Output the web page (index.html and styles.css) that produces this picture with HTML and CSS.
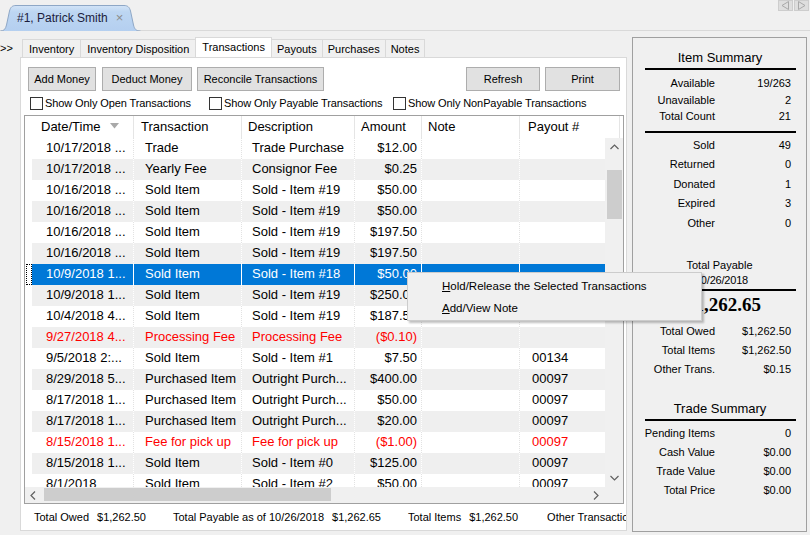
FILE: index.html
```html
<!DOCTYPE html>
<html>
<head>
<meta charset="utf-8">
<title>Patrick Smith - Transactions</title>
<link rel="stylesheet" href="styles.css">
</head>
<body>
<div class="topbar">
  <div class="doc-tab">
    <svg class="tab-shape" width="141" height="26" viewBox="0 0 141 26">
      <defs>
        <linearGradient id="tabg" x1="0" y1="0" x2="0" y2="1">
          <stop offset="0" stop-color="#d3e4f7"/>
          <stop offset="0.25" stop-color="#bdd6f2"/>
          <stop offset="1" stop-color="#b4cff0"/>
        </linearGradient>
      </defs>
      <path d="M0.5,26 C4,26 5.5,24 6.5,20 L9.5,6 C10.5,2 12.5,0.5 16,0.5 L124,0.5 C127.5,0.5 129.5,2 130.5,6 L133.5,20 C134.5,24 136,26 140.5,26" fill="url(#tabg)" stroke="#8ea7c6" stroke-width="1"/>
    </svg>
    <span class="doc-title">#1, Patrick Smith</span>
    <span class="doc-close">×</span>
  </div>
  <div class="nav-arrows">
    <span class="nav-btn"><svg width="9" height="9" viewBox="0 0 9 9"><path d="M7.5,0.5 L1,4.5 L7.5,8.5 Z" fill="none" stroke="#a8a8a8"/></svg></span>
    <span class="nav-btn"><svg width="9" height="9" viewBox="0 0 9 9"><path d="M1.5,0.5 L8,4.5 L1.5,8.5 Z" fill="none" stroke="#a8a8a8"/></svg></span>
  </div>
</div>

<div class="main">
  <div class="left">
    <div class="subtabs">
      <span class="more">&gt;&gt;</span>
      <span class="stab wide">Inventory</span>
      <span class="stab wide">Inventory Disposition</span>
      <span class="stab active">Transactions</span>
      <span class="stab">Payouts</span>
      <span class="stab">Purchases</span>
      <span class="stab">Notes</span>
    </div>
    <div class="panel">
      <div class="toolbar">
        <button class="btn w-add">Add Money</button>
        <button class="btn w-deduct">Deduct Money</button>
        <button class="btn w-rec">Reconcile Transactions</button>
        <span class="spacer"></span>
        <button class="btn w-ref">Refresh</button>
        <button class="btn w-print">Print</button>
      </div>
      <div class="filters">
        <label class="chk f1"><span class="box"></span>Show Only Open Transactions</label>
        <label class="chk f2"><span class="box"></span>Show Only Payable Transactions</label>
        <label class="chk f3"><span class="box"></span>Show Only NonPayable Transactions</label>
      </div>

      <div class="grid">
        <div class="ghead">
          <div class="h rh"></div>
          <div class="h date">Date/Time <svg class="sort" width="9" height="6" viewBox="0 0 9 6"><path d="M0,0 L9,0 L4.5,5.5 Z" fill="#a9a9a9"/></svg></div>
          <div class="h trans">Transaction</div>
          <div class="h desc">Description</div>
          <div class="h amt">Amount</div>
          <div class="h note">Note</div>
          <div class="h pay">Payout #</div>
        </div>
        <div class="gbody">
          <div class="rows">
            <div class="row"><div class="c rh"></div><div class="c date">10/17/2018 ...</div><div class="c trans">Trade</div><div class="c desc">Trade Purchase</div><div class="c amt">$12.00</div><div class="c note"></div><div class="c pay"></div></div>
            <div class="row alt"><div class="c rh"></div><div class="c date">10/17/2018 ...</div><div class="c trans">Yearly Fee</div><div class="c desc">Consignor Fee</div><div class="c amt">$0.25</div><div class="c note"></div><div class="c pay"></div></div>
            <div class="row"><div class="c rh"></div><div class="c date">10/16/2018 ...</div><div class="c trans">Sold Item</div><div class="c desc">Sold - Item #19</div><div class="c amt">$50.00</div><div class="c note"></div><div class="c pay"></div></div>
            <div class="row alt"><div class="c rh"></div><div class="c date">10/16/2018 ...</div><div class="c trans">Sold Item</div><div class="c desc">Sold - Item #19</div><div class="c amt">$50.00</div><div class="c note"></div><div class="c pay"></div></div>
            <div class="row"><div class="c rh"></div><div class="c date">10/16/2018 ...</div><div class="c trans">Sold Item</div><div class="c desc">Sold - Item #19</div><div class="c amt">$197.50</div><div class="c note"></div><div class="c pay"></div></div>
            <div class="row alt"><div class="c rh"></div><div class="c date">10/16/2018 ...</div><div class="c trans">Sold Item</div><div class="c desc">Sold - Item #19</div><div class="c amt">$197.50</div><div class="c note"></div><div class="c pay"></div></div>
            <div class="row sel"><div class="c rh"><span class="focus"></span></div><div class="c date">10/9/2018 1...</div><div class="c trans">Sold Item</div><div class="c desc">Sold - Item #18</div><div class="c amt">$50.00</div><div class="c note"></div><div class="c pay"></div></div>
            <div class="row alt"><div class="c rh"></div><div class="c date">10/9/2018 1...</div><div class="c trans">Sold Item</div><div class="c desc">Sold - Item #19</div><div class="c amt">$250.00</div><div class="c note"></div><div class="c pay"></div></div>
            <div class="row"><div class="c rh"></div><div class="c date">10/4/2018 4...</div><div class="c trans">Sold Item</div><div class="c desc">Sold - Item #19</div><div class="c amt">$187.50</div><div class="c note"></div><div class="c pay"></div></div>
            <div class="row alt red"><div class="c rh"></div><div class="c date">9/27/2018 4...</div><div class="c trans">Processing Fee</div><div class="c desc">Processing Fee</div><div class="c amt">($0.10)</div><div class="c note"></div><div class="c pay"></div></div>
            <div class="row"><div class="c rh"></div><div class="c date">9/5/2018 2:...</div><div class="c trans">Sold Item</div><div class="c desc">Sold - Item #1</div><div class="c amt">$7.50</div><div class="c note"></div><div class="c pay">00134</div></div>
            <div class="row alt"><div class="c rh"></div><div class="c date">8/29/2018 5...</div><div class="c trans">Purchased Item</div><div class="c desc">Outright Purch...</div><div class="c amt">$400.00</div><div class="c note"></div><div class="c pay">00097</div></div>
            <div class="row"><div class="c rh"></div><div class="c date">8/17/2018 1...</div><div class="c trans">Purchased Item</div><div class="c desc">Outright Purch...</div><div class="c amt">$50.00</div><div class="c note"></div><div class="c pay">00097</div></div>
            <div class="row alt"><div class="c rh"></div><div class="c date">8/17/2018 1...</div><div class="c trans">Purchased Item</div><div class="c desc">Outright Purch...</div><div class="c amt">$20.00</div><div class="c note"></div><div class="c pay">00097</div></div>
            <div class="row red"><div class="c rh"></div><div class="c date">8/15/2018 1...</div><div class="c trans">Fee for pick up</div><div class="c desc">Fee for pick up</div><div class="c amt">($1.00)</div><div class="c note"></div><div class="c pay">00097</div></div>
            <div class="row alt"><div class="c rh"></div><div class="c date">8/15/2018 1...</div><div class="c trans">Sold Item</div><div class="c desc">Sold - Item #0</div><div class="c amt">$125.00</div><div class="c note"></div><div class="c pay">00097</div></div>
            <div class="row"><div class="c rh"></div><div class="c date">8/1/2018</div><div class="c trans">Sold Item</div><div class="c desc">Sold - Item #2</div><div class="c amt">$50.00</div><div class="c note"></div><div class="c pay">00097</div></div>
          </div>
          <div class="vscroll">
            <svg class="chev" width="9" height="6" viewBox="0 0 9 6"><path d="M0.5,5 L4.5,1 L8.5,5" fill="none" stroke="#606060" stroke-width="1.2"/></svg>
            <div class="vtrack"><div class="vthumb"></div></div>
            <svg class="chev" width="9" height="6" viewBox="0 0 9 6"><path d="M0.5,1 L4.5,5 L8.5,1" fill="none" stroke="#606060" stroke-width="1.2"/></svg>
          </div>
        </div>
        <div class="hrow">
          <div class="hscroll">
            <svg class="chev-h" width="6" height="9" viewBox="0 0 6 9"><path d="M5,0.5 L1,4.5 L5,8.5" fill="none" stroke="#606060" stroke-width="1.2"/></svg>
            <div class="htrack"><div class="hthumb"></div></div>
            <svg class="chev-h" width="6" height="9" viewBox="0 0 6 9"><path d="M1,0.5 L5,4.5 L1,8.5" fill="none" stroke="#606060" stroke-width="1.2"/></svg>
          </div>
          <div class="corner"></div>
        </div>
      </div>

      <div class="totals">
        <span class="tg"><span>Total Owed</span><span>$1,262.50</span></span>
        <span class="tg"><span>Total Payable as of 10/26/2018</span><span>$1,262.65</span></span>
        <span class="tg g3"><span>Total Items</span><span>$1,262.50</span></span>
        <span class="tg"><span>Other Transactions</span><span>$0.15</span></span>
      </div>
    </div>
  </div>

  <div class="summary">
    <div class="s-head first">Item Summary</div>
    <div class="rule"></div>
    <div class="kv tight">
      <span>Available</span><span>19/263</span>
      <span>Unavailable</span><span>2</span>
      <span>Total Count</span><span>21</span>
    </div>
    <div class="rule r2"></div>
    <div class="kv wide">
      <span>Sold</span><span>49</span>
      <span>Returned</span><span>0</span>
      <span>Donated</span><span>1</span>
      <span>Expired</span><span>3</span>
      <span>Other</span><span>0</span>
    </div>
    <div class="payable">
      <div>Total Payable</div>
      <div class="asof">as of 10/26/2018</div>
    </div>
    <div class="rule r3"></div>
    <div class="big">$1,262.65</div>
    <div class="kv mid k3">
      <span>Total Owed</span><span>$1,262.50</span>
      <span>Total Items</span><span>$1,262.50</span>
      <span>Other Trans.</span><span>$0.15</span>
    </div>
    <div class="s-head trade">Trade Summary</div>
    <div class="rule r4"></div>
    <div class="kv mid k4">
      <span>Pending Items</span><span>0</span>
      <span>Cash Value</span><span>$0.00</span>
      <span>Trade Value</span><span>$0.00</span>
      <span>Total Price</span><span>$0.00</span>
    </div>
  </div>
</div>

<div class="ctx-menu">
  <div class="mi"><u>H</u>old/Release the Selected Transactions</div>
  <div class="mi"><u>A</u>dd/View Note</div>
</div>
</body>
</html>
```

FILE: styles.css
```css
* { box-sizing: border-box; }

body {
  margin: 0;
  width: 810px;
  height: 535px;
  overflow: hidden;
  position: relative;
  background: #f0f0f0;
  font-family: "Liberation Sans", Arial, sans-serif;
  font-size: 11px;
  color: #000;
}

/* ---------- document tab strip ---------- */
.topbar {
  height: 31px;
  border-bottom: 1px solid #d9d9d9;
  display: flex;
  justify-content: space-between;
  align-items: flex-start;
}

.doc-tab {
  position: relative;
  margin-top: 5px;
  width: 141px;
  height: 26px;
  display: flex;
  align-items: center;
  padding: 0 0 1px 17px;
  font-size: 12px;
  color: #1c1c3c;
}

.tab-shape { position: absolute; left: 0; top: 0; }

.doc-title, .doc-close { position: relative; }

.doc-close {
  margin-left: 8px;
  color: #8c8c8c;
  font-size: 13px;
}

.nav-arrows {
  display: flex;
  gap: 1px;
  margin-right: 1px;
}

.nav-btn {
  width: 15px;
  height: 11px;
  background: #dedede;
  border: 1px solid #cdcdcd;
  display: flex;
  align-items: center;
  justify-content: center;
}

/* ---------- main layout ---------- */
.main {
  display: flex;
  margin-top: 6px;
}

.left {
  width: 627px;
  display: flex;
  flex-direction: column;
}

.subtabs {
  height: 20px;
  display: flex;
  align-items: flex-end;
}

.more {
  width: 22px;
  align-self: center;
  padding-top: 2px;
  font-size: 11px;
}

.stab {
  height: 18px;
  padding: 0 5px;
  border: 1px solid #d9d9d9;
  border-bottom: none;
  margin-right: -1px;
  display: flex;
  align-items: center;
  background: #f0f0f0;
  font-size: 11px;
}

.stab.wide { padding: 0 6px; }

.stab.active {
  height: 20px;
  background: #fff;
  padding: 0 6px 2px 6px;
  position: relative;
  z-index: 1;
}

.panel {
  margin-left: 20px;
  width: 607px;
  height: 474px;
  border: 1px solid #d9d9d9;
  background: #fff;
  display: flex;
  flex-direction: column;
}

/* toolbar */
.toolbar {
  display: flex;
  padding: 9px 6px 0 7px;
  height: 33px;
}

.btn {
  height: 24px;
  margin: 0;
  padding: 0;
  font-family: "Liberation Sans", Arial, sans-serif;
  font-size: 11px;
  color: #000;
  background: #e1e1e1;
  border: 1px solid #adadad;
  border-radius: 0;
}

.w-add { width: 68px; }
.w-deduct { width: 90px; margin-left: 6px; }
.w-rec { width: 127px; margin-left: 5px; }
.w-ref { width: 74px; }
.w-print { width: 75px; margin-left: 5px; }

.spacer { flex: 1; }

/* filters */
.filters {
  display: flex;
  height: 24px;
  padding-top: 5px;
  padding-left: 9px;
}

.chk {
  display: flex;
  align-items: center;
  height: 14px;
  font-size: 11px;
  letter-spacing: -0.1px;
}

.box {
  width: 13px;
  height: 13px;
  border: 1px solid #333;
  background: #fff;
  margin-right: 2px;
}

.f1 { width: 179px; }
.f2 { width: 184px; }

/* ---------- grid ---------- */
.grid {
  margin-left: 3px;
  width: 600px;
  border: 1px solid #a0a0a0;
  display: flex;
  flex-direction: column;
  font-size: 13px;
}

.ghead {
  display: flex;
  height: 22px;
  background: #fff;
  overflow: hidden;
}

.h {
  flex: none;
  height: 22px;
  line-height: 22px;
  border-right: 1px solid #e5e5e5;
  padding-left: 6px;
  white-space: nowrap;
}

.h.rh { border-right: none; }
.h.date { padding-left: 9px; }
.h.trans { padding-left: 7px; }
.h.pay { padding-left: 8px; }

.sort { margin-left: 6px; vertical-align: 2px; }

.rh { width: 7px; }
.date { width: 102px; }
.trans { width: 108px; }
.desc { width: 113px; }
.amt { width: 67px; }
.note { width: 98px; }
.pay { width: 100px; }

.gbody {
  display: flex;
  height: 349px;
}

.rows {
  width: 580px;
  overflow: hidden;
}

.row {
  display: flex;
  height: 21px;
  background: #fff;
}

.row.alt { background: #efefef; }
.row.red { color: #ff0000; }

.c {
  flex: none;
  height: 21px;
  line-height: 20px;
  white-space: nowrap;
  overflow: hidden;
  border-right: 1px dotted #e2e2e2;
  padding-left: 10px;
}

.row.alt .c { border-right-color: #ffffff; }

.c.rh { padding: 0; background: #fff; border-right: none; }
.c.date { padding-left: 14px; }
.c.trans { padding-left: 11px; }
.c.amt { text-align: right; padding: 0 4px 0 0; }
.c.pay { padding-left: 12px; border-right: none; }

.row.sel { background: #0078d7; color: #fff; }
.row.sel .c { border-right: 1px solid #ffffff; }
.row.sel .c.rh { border-right: none; position: relative; }
.row.sel .c.pay { border-right: none; }

.focus {
  position: absolute;
  left: 1px;
  top: 0;
  width: 6px;
  height: 21px;
  border: 1px dotted #000;
}

/* scrollbars */
.vscroll {
  width: 18px;
  background: #f0f0f0;
  display: flex;
  flex-direction: column;
  align-items: center;
  padding-top: 6px;
}

.chev { flex: none; }

.vtrack {
  flex: 1;
  width: 100%;
  padding-top: 20px;
  padding-left: 2px;
}

.vthumb {
  width: 15px;
  height: 49px;
  background: #cdcdcd;
}

.vscroll .chev:last-child { margin-bottom: 6px; }

.hrow {
  display: flex;
  height: 16px;
}

.hscroll {
  width: 580px;
  background: #f0f0f0;
  display: flex;
  align-items: center;
  padding: 0 6px 0 5px;
}

.htrack {
  flex: 1;
  height: 100%;
  padding: 1px 0 2px 8px;
}

.hthumb {
  width: 287px;
  height: 100%;
  background: #cdcdcd;
}

.corner {
  flex: 1;
  background: #f0f0f0;
}

/* totals bar */
.totals {
  display: flex;
  height: 26px;
  align-items: center;
  padding-left: 13px;
  white-space: nowrap;
  overflow: hidden;
  font-size: 11px;
}

.tg { display: flex; gap: 8px; margin-right: 27px; flex: none; }
.tg.g3 { margin-right: 29px; }

/* ---------- summary panel ---------- */
.summary {
  margin-left: 5px;
  width: 175px;
  height: 495px;
  border: 1px solid #a0a0a0;
  background: #f0f0f0;
  display: flex;
  flex-direction: column;
}

.s-head {
  text-align: center;
  font-size: 13px;
  line-height: 16px;
  padding-left: 1px;
}

.s-head.first { margin-top: 12px; }
.s-head.trade { margin-top: 22px; }

.rule {
  height: 2px;
  background: #000;
  margin: 2px 10px 0 12px;
}

.rule.r2 { margin-top: 6px; }
.rule.r3 { margin-top: 1px; }
.rule.r4 { margin-top: 2px; }

.kv {
  display: grid;
  grid-template-columns: 82px 76px;
  font-size: 11px;
}

.kv span { text-align: right; white-space: nowrap; }

.kv.tight { margin-top: 5px; grid-auto-rows: 16.5px; line-height: 16.5px; }
.kv.wide { margin-top: 3px; grid-auto-rows: 19.5px; line-height: 19.5px; }
.kv.mid { grid-auto-rows: 19px; line-height: 19px; }
.kv.k3 { margin-top: 6px; }
.kv.k4 { margin-top: 3px; }

.payable {
  margin-top: 25px;
  text-align: center;
  font-size: 11px;
  line-height: 15px;
}

.asof { text-align: right; padding-right: 58px; letter-spacing: -0.2px; }

.big {
  margin-top: 3px;
  padding-left: 7px;
  text-align: center;
  font-family: "Liberation Serif", "Times New Roman", serif;
  font-weight: bold;
  font-size: 19px;
  line-height: 22px;
}

/* ---------- context menu ---------- */
.ctx-menu {
  position: absolute;
  left: 407px;
  top: 272px;
  width: 295px;
  height: 49px;
  background: #f0f0f0;
  border: 1px solid #cccccc;
  box-shadow: 2px 2px 2px rgba(0,0,0,0.25);
  padding-top: 2px;
  font-size: 11.5px;
  z-index: 5;
}

.mi {
  height: 22px;
  line-height: 22px;
  padding-left: 34px;
}
```
